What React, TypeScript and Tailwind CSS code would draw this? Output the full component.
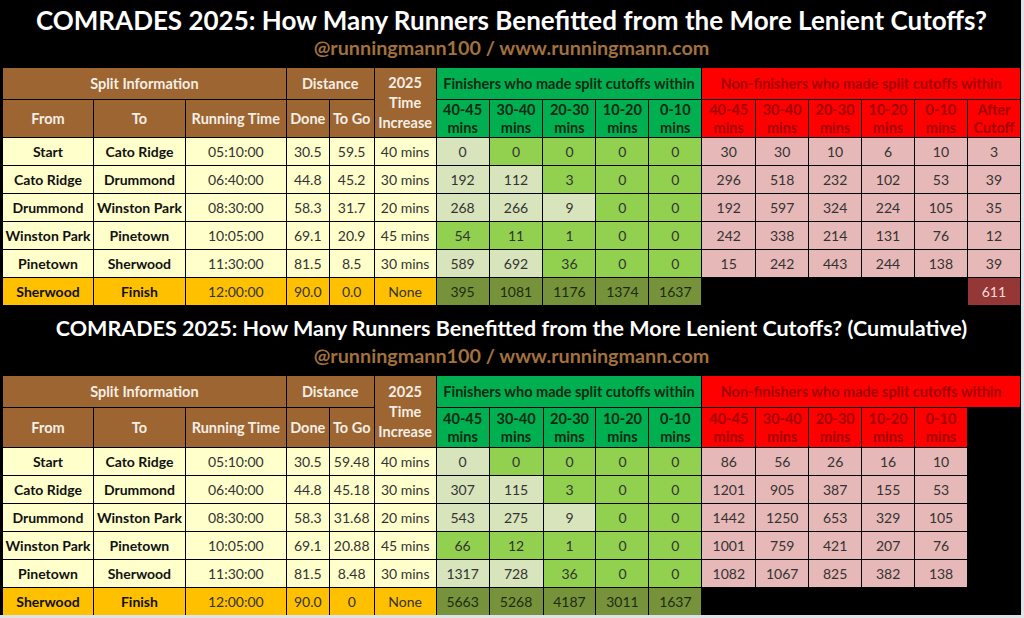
type Tone = 'p' | 'g';

type Row = {
  from: string;
  to: string;
  time: string;
  done: string;
  togo: string;
  inc: string;
  fin: [string, Tone][];
  non: string[];
};

const table1: Row[] = [
  { from: 'Start', to: 'Cato Ridge', time: '05:10:00', done: '30.5', togo: '59.5', inc: '40 mins', fin: [['0', 'p'], ['0', 'g'], ['0', 'g'], ['0', 'g'], ['0', 'g']], non: ['30', '30', '10', '6', '10', '3'] },
  { from: 'Cato Ridge', to: 'Drummond', time: '06:40:00', done: '44.8', togo: '45.2', inc: '30 mins', fin: [['192', 'p'], ['112', 'p'], ['3', 'g'], ['0', 'g'], ['0', 'g']], non: ['296', '518', '232', '102', '53', '39'] },
  { from: 'Drummond', to: 'Winston Park', time: '08:30:00', done: '58.3', togo: '31.7', inc: '20 mins', fin: [['268', 'p'], ['266', 'p'], ['9', 'p'], ['0', 'g'], ['0', 'g']], non: ['192', '597', '324', '224', '105', '35'] },
  { from: 'Winston Park', to: 'Pinetown', time: '10:05:00', done: '69.1', togo: '20.9', inc: '45 mins', fin: [['54', 'g'], ['11', 'g'], ['1', 'g'], ['0', 'g'], ['0', 'g']], non: ['242', '338', '214', '131', '76', '12'] },
  { from: 'Pinetown', to: 'Sherwood', time: '11:30:00', done: '81.5', togo: '8.5', inc: '30 mins', fin: [['589', 'p'], ['692', 'p'], ['36', 'g'], ['0', 'g'], ['0', 'g']], non: ['15', '242', '443', '244', '138', '39'] },
];

const table2: Row[] = [
  { from: 'Start', to: 'Cato Ridge', time: '05:10:00', done: '30.5', togo: '59.48', inc: '40 mins', fin: [['0', 'p'], ['0', 'g'], ['0', 'g'], ['0', 'g'], ['0', 'g']], non: ['86', '56', '26', '16', '10'] },
  { from: 'Cato Ridge', to: 'Drummond', time: '06:40:00', done: '44.8', togo: '45.18', inc: '30 mins', fin: [['307', 'p'], ['115', 'p'], ['3', 'g'], ['0', 'g'], ['0', 'g']], non: ['1201', '905', '387', '155', '53'] },
  { from: 'Drummond', to: 'Winston Park', time: '08:30:00', done: '58.3', togo: '31.68', inc: '20 mins', fin: [['543', 'p'], ['275', 'p'], ['9', 'p'], ['0', 'g'], ['0', 'g']], non: ['1442', '1250', '653', '329', '105'] },
  { from: 'Winston Park', to: 'Pinetown', time: '10:05:00', done: '69.1', togo: '20.88', inc: '45 mins', fin: [['66', 'g'], ['12', 'g'], ['1', 'g'], ['0', 'g'], ['0', 'g']], non: ['1001', '759', '421', '207', '76'] },
  { from: 'Pinetown', to: 'Sherwood', time: '11:30:00', done: '81.5', togo: '8.48', inc: '30 mins', fin: [['1317', 'p'], ['728', 'p'], ['36', 'g'], ['0', 'g'], ['0', 'g']], non: ['1082', '1067', '825', '382', '138'] },
];

const widths = [91, 92, 101, 43, 45, 62, 53, 54, 53, 53, 53, 54, 53, 53, 53, 53, 53];
const ranges = ['40-45', '30-40', '20-30', '10-20', '0-10'];

const brown = 'border border-black bg-[#9c6532] text-[#f4eee4] font-bold text-[14.5px]';
const cream = 'border border-black bg-[#ffffcc]';
const gold = 'border border-black bg-[#ffc000]';
const greenHead = 'border border-black bg-[#00b050] font-bold text-[14.5px] text-[#0c2a14]';
const redHead = 'border border-black bg-[#ff0000] font-bold text-[14.5px] text-[#a30000]';

function Title({ text, size }: { text: string; size: string }) {
  return (
    <div className="flex flex-col items-center whitespace-nowrap">
      <div className={`${size} font-bold leading-[30px] text-white`}>{text}</div>
      <div className="text-[19.75px] font-bold leading-[26px] text-[#a2713d]">@runningmann100 / www.runningmann.com</div>
    </div>
  );
}

function SplitTable({ rows, total, cumulative }: { rows: Row[]; total: Row; cumulative?: boolean }) {
  return (
    <table className="table-fixed border-collapse text-center text-[14px] leading-[16px]">
      <colgroup>
        {widths.map((w, i) => (
          <col key={i} style={{ width: w }} />
        ))}
      </colgroup>
      <tbody>
        <tr className="h-[32px]">
          <td colSpan={3} className={brown}>Split Information</td>
          <td colSpan={2} className={brown}>Distance</td>
          <td rowSpan={2} className={`${brown} leading-[20px]`}>
            2025
            <br />
            Time
            <br />
            Increase
          </td>
          <td colSpan={5} className={greenHead}>
            Finishers who made split cutoffs within
          </td>
          <td colSpan={6} className={redHead}>
            Non-finishers who made split cutoffs within
          </td>
        </tr>
        <tr className={cumulative ? 'h-[40px]' : 'h-[38px]'}>
          <td className={brown}>From</td>
          <td className={brown}>To</td>
          <td className={brown}>Running Time</td>
          <td className={brown}>Done</td>
          <td className={brown}>To Go</td>
          {ranges.map((r) => (
            <td key={'f' + r} className={`${greenHead} leading-[18px]`}>
              {r}
              <br />
              mins
            </td>
          ))}
          {ranges.map((r) => (
            <td key={'n' + r} className={`${redHead} leading-[18px]`}>
              {r}
              <br />
              mins
            </td>
          ))}
          {cumulative ? (
            <td className="border-l border-black bg-black" />
          ) : (
            <td className={`${redHead} leading-[18px]`}>
              After
              <br />
              Cutoff
            </td>
          )}
        </tr>
        {rows.map((r) => (
          <tr key={r.from} className="h-[28px] text-[#333]">
            <td className={`${cream} font-bold text-[#111]`}>{r.from}</td>
            <td className={`${cream} font-bold text-[#111]`}>{r.to}</td>
            <td className={cream}>{r.time}</td>
            <td className={cream}>{r.done}</td>
            <td className={cream}>{r.togo}</td>
            <td className={cream}>{r.inc}</td>
            {r.fin.map(([v, t], i) => (
              <td key={i} className={`border border-black ${t === 'p' ? 'bg-[#d8e4bc]' : 'bg-[#92d050]'}`}>
                {v}
              </td>
            ))}
            {r.non.map((v, i) => (
              <td key={i} className="border border-black bg-[#e6b8b7]">
                {v}
              </td>
            ))}
            {cumulative && <td className="border-l border-black bg-black" />}
          </tr>
        ))}
        <tr className="h-[28px] text-[#333]">
          <td className={`${gold} font-bold text-[#111]`}>{total.from}</td>
          <td className={`${gold} font-bold text-[#111]`}>{total.to}</td>
          <td className={gold}>{total.time}</td>
          <td className={gold}>{total.done}</td>
          <td className={gold}>{total.togo}</td>
          <td className={gold}>{total.inc}</td>
          {total.fin.map(([v], i) => (
            <td key={i} className="border border-black bg-[#76933c] text-[#1e2a10]">
              {v}
            </td>
          ))}
          {cumulative ? (
            <td colSpan={6} className="border-l border-black bg-black" />
          ) : (
            <>
              <td colSpan={5} className="border-l border-black bg-black" />
              <td className="border border-black bg-[#953735] text-[#f3dcdc]">{total.non[0]}</td>
            </>
          )}
        </tr>
      </tbody>
    </table>
  );
}

const total1: Row = {
  from: 'Sherwood', to: 'Finish', time: '12:00:00', done: '90.0', togo: '0.0', inc: 'None',
  fin: [['395', 'g'], ['1081', 'g'], ['1176', 'g'], ['1374', 'g'], ['1637', 'g']], non: ['611'],
};

const total2: Row = {
  from: 'Sherwood', to: 'Finish', time: '12:00:00', done: '90.0', togo: '0', inc: 'None',
  fin: [['5663', 'g'], ['5268', 'g'], ['4187', 'g'], ['3011', 'g'], ['1637', 'g']], non: [],
};

export default function App() {
  return (
    <div className="h-[618px] w-[1024px] overflow-hidden bg-[#dfe3e7] font-['Lato',sans-serif]">
      <div className="h-[615px] w-[1021px] overflow-hidden bg-black pl-[2px]">
        <div className="flex h-[67px] flex-col justify-center pb-[2px]">
          <Title size="text-[26px]" text="COMRADES 2025: How Many Runners Benefitted from the More Lenient Cutoffs?" />
        </div>
        <SplitTable rows={table1} total={total1} />
        <div className="flex h-[69px] flex-col justify-center">
          <Title size="text-[21.5px]" text="COMRADES 2025: How Many Runners Benefitted from the More Lenient Cutoffs? (Cumulative)" />
        </div>
        <SplitTable rows={table2} total={total2} cumulative />
      </div>
    </div>
  );
}
